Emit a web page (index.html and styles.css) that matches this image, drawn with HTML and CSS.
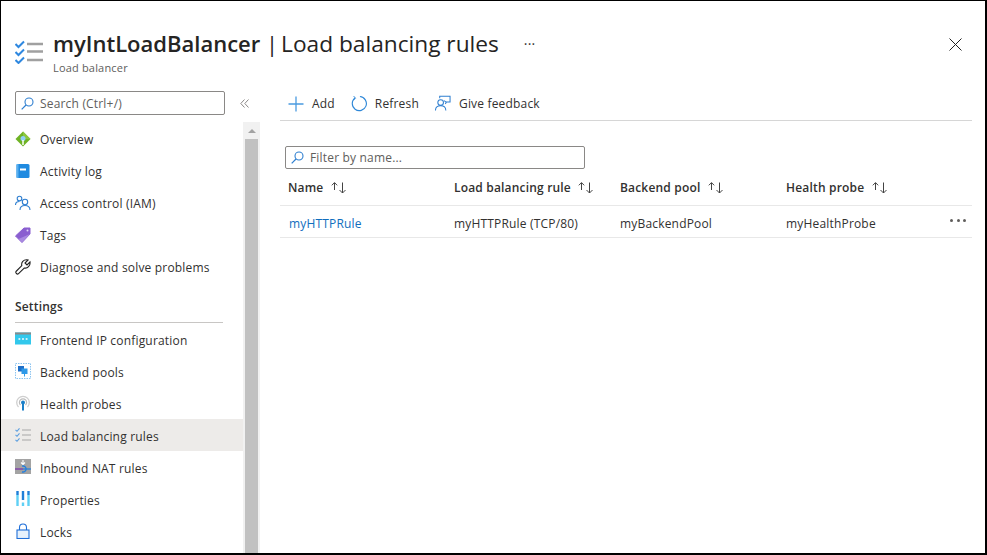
FILE: index.html
```html
<!DOCTYPE html>
<html lang="en">
<head>
  <meta charset="UTF-8">
  <title>myIntLoadBalancer | Load balancing rules</title>
  <link rel="stylesheet" href="styles.css">
</head>
<body>
  <div class="blade">
    <header class="blade-header">
      <svg class="header-icon" width="28" height="24" viewBox="0 0 28 24">
        <path d="M.5 4l3 3 5.500-5.500M.5 12l3 3 5.500-5.500M.5 20l3 3 5.500-5.500" fill="none" stroke="#2f88e0" stroke-width="2"/>
        <path d="M12 4h16M12 11.500h16M12 20h16" fill="none" stroke="#a0a0a0" stroke-width="2.400"/>
      </svg>
      <div class="title-block">
        <h1><b>myIntLoadBalancer</b> |<span>Load balancing rules</span></h1>
        <p>Load balancer</p>
      </div>
      <span class="title-more">···</span>
      <svg class="close-icon" width="13" height="13" viewBox="0 0 13 13">
        <path d="M.5.5l12 12M12.500.5l-12 12" stroke="#222" stroke-width="1" fill="none"/>
      </svg>
    </header>

    <div class="blade-body">
      <nav class="sidebar">
        <div class="sidebar-top">
          <div class="search-box">
            <svg width="13" height="13" viewBox="0 0 13 13"><circle cx="8" cy="5" r="4" fill="none" stroke="#2f7fd0" stroke-width="1.100"/><path d="M5 8l-4.300 4.300" stroke="#2f7fd0" stroke-width="1.200"/></svg>
            <span>Search (Ctrl+/)</span>
          </div>
          <svg class="collapse" width="9" height="9" viewBox="0 0 9 9"><path d="M4.500.5L.8 4.500l3.700 4M8.500.5L4.800 4.500l3.700 4" fill="none" stroke="#8a8886" stroke-width="1"/></svg>
        </div>
        <div class="sidebar-main">
          <ul class="menu">
            <li class="menu-item">
              <svg width="16" height="16" viewBox="0 0 16 16"><path d="M8 .5L15.500 8 8 15.500.5 8z" fill="#6fb325"/><path d="M8 .5L15.500 8 8 8z" fill="#8cc63f"/><circle cx="8" cy="7.500" r="2.500" fill="#8fd0f5"/><path d="M8 9v5" stroke="#fff" stroke-width="1.500"/></svg>
              <span>Overview</span>
            </li>
            <li class="menu-item">
              <svg width="16" height="16" viewBox="0 0 16 16"><rect x="1.500" y="1" width="13" height="14" rx="1.500" fill="#1f8ae0"/><rect x="1.500" y="1" width="2" height="14" fill="#5ab0f0"/><rect x="5" y="5.500" width="6" height="2" fill="#fff"/></svg>
              <span>Activity log</span>
            </li>
            <li class="menu-item">
              <svg width="16" height="16" viewBox="0 0 16 16" fill="none" stroke="#2f7fd0" stroke-width="1.100"><circle cx="4.500" cy="3.500" r="2.300"/><path d="M.5 10c0-2.500 1.500-3.500 4-3.500"/><circle cx="10" cy="7" r="2.700"/><path d="M5 15c0-3 2-4.500 5-4.500s5 1.500 5 4.500"/></svg>
              <span>Access control (IAM)</span>
            </li>
            <li class="menu-item">
              <svg width="16" height="16" viewBox="0 0 16 16"><path d="M9 1h6v6l-8 8.500L.5 9z" fill="#8a5fd0" stroke="#8a5fd0" stroke-linejoin="round"/><path d="M15 7l-8 8.500L3.500 12z" fill="#a98ae0"/><circle cx="12.500" cy="3.500" r="1" fill="#e0d4f5"/></svg>
              <span>Tags</span>
            </li>
            <li class="menu-item">
              <svg width="16" height="16" viewBox="0 0 16 16"><path d="M1 12.500L6.800 6.700C6 3.500 8.500.5 12 .8l1 .2-3 3 2 2 3-3c.6 3.800-2.500 6.800-5.800 6l-5.900 5.800c-1.100 1-3.100-1-2.300-2.300z" fill="none" stroke="#222" stroke-width="1.100"/></svg>
              <span>Diagnose and solve problems</span>
            </li>
          </ul>
          <div class="menu-section">Settings</div>
          <ul class="menu menu-settings">
            <li class="menu-item">
              <svg width="16" height="16" viewBox="0 0 16 16"><rect y="1.500" width="16" height="12" fill="#32c8ec"/><rect y="1.500" width="16" height="2" fill="#8a8a8a"/><path d="M3.500 8h1.800M7.100 8h1.800M10.700 8h1.800" stroke="#fff" stroke-width="1.500"/></svg>
              <span>Frontend IP configuration</span>
            </li>
            <li class="menu-item">
              <svg width="16" height="16" viewBox="0 0 16 16"><rect x=".5" y=".5" width="15" height="15" fill="none" stroke="#8cc4f0" stroke-dasharray="1.500 1"/><rect x="3" y="3" width="6" height="5.500" fill="#1f6fc8"/><rect x="6.500" y="5.500" width="6" height="5.500" fill="#2f9ae8"/><path d="M9.500 11v2.500" stroke="#2f9ae8"/></svg>
              <span>Backend pools</span>
            </li>
            <li class="menu-item">
              <svg width="16" height="16" viewBox="0 0 16 16"><path d="M3.500 12a6.300 6.300 0 1 1 9 0" fill="none" stroke="#cfcfcf" stroke-width="1.300"/><path d="M5.500 10a3.600 3.600 0 1 1 5 0" fill="none" stroke="#bdbdbd" stroke-width="1.200"/><circle cx="8" cy="7.500" r="2" fill="#1a7fc8"/><path d="M8 8v7.500" stroke="#1a7fc8" stroke-width="2"/></svg>
              <span>Health probes</span>
            </li>
            <li class="menu-item active">
              <svg width="16" height="16" viewBox="0 0 16 16"><path d="M.5 2.800l1.500 1.500 2.500-3M.5 7.800l1.500 1.500 2.500-3M.5 12.800l1.500 1.500 2.500-3" fill="none" stroke="#5a9ee0" stroke-width="1.100"/><path d="M7 3h9M7 8h9M7 13h9" stroke="#a8a8a8" stroke-width="1.200"/></svg>
              <span>Load balancing rules</span>
            </li>
            <li class="menu-item">
              <svg width="16" height="16" viewBox="0 0 16 16"><rect width="16" height="15" fill="#a3a3a3"/><path d="M8 1v4M6 3.500L8 5.500l2-2" fill="none" stroke="#fff" stroke-width="1.100"/><path d="M0 10h8" stroke="#7a2fa8" stroke-width="1.200"/><path d="M8 10h8" stroke="#1f7fe0" stroke-width="1.200"/><path d="M7 7.200a3 3 0 1 1 0 5.600" fill="none" stroke="#1f7fe0" stroke-width="1.300"/></svg>
              <span>Inbound NAT rules</span>
            </li>
            <li class="menu-item">
              <svg width="16" height="16" viewBox="0 0 16 16"><path d="M2.500 0v4M8 0v9M13.500 0v4" stroke="#1f7fd8" stroke-width="2.400"/><path d="M2.500 4v11M13.500 4v11M8 11.500V15" stroke="#5fd0f5" stroke-width="2.400"/></svg>
              <span>Properties</span>
            </li>
            <li class="menu-item">
              <svg width="16" height="16" viewBox="0 0 16 16"><rect x="2" y="7" width="12" height="8.500" fill="#e6f1fc" stroke="#1f6fd8" stroke-width="1.100"/><path d="M4.500 7V4.500a3.500 3.500 0 0 1 7 0V7" fill="none" stroke="#1f6fd8" stroke-width="1.100"/></svg>
              <span>Locks</span>
            </li>
          </ul>
        </div>
      </nav>

      <div class="scrollbar"><div class="scroll-up"></div><div class="scroll-thumb"></div></div>

      <main class="content">
        <div class="toolbar">
          <button class="tool">
            <svg width="16" height="16" viewBox="0 0 16 16"><path d="M8 .5v15M.5 8h15" stroke="#4a9be0" stroke-width="1.300"/></svg>
            Add
          </button>
          <button class="tool">
            <svg width="16" height="17" viewBox="0 0 17 17"><path d="M9.500 1.100a7.500 7.500 0 1 1-5.200 1.500" fill="none" stroke="#2f88d8" stroke-width="1.200"/><path d="M2.800 .6l2 2.300-2.400 1.700" fill="none" stroke="#2f88d8" stroke-width="1"/></svg>
            Refresh
          </button>
          <button class="tool">
            <svg width="16" height="17" viewBox="0 0 17 17" fill="none" stroke="#2f7fd0" stroke-width="1.100"><path d="M5 3V.8h11V7h-4"/><path d="M9.500 5.500l2.500 1.500-1 2"/><circle cx="6" cy="7.500" r="3"/><path d="M.5 16c0-3.500 2-5 5.500-5s5.500 1.500 5.500 5"/></svg>
            Give feedback
          </button>
        </div>

        <div class="filter-box">
          <svg width="13" height="13" viewBox="0 0 13 13"><circle cx="8" cy="5" r="4" fill="none" stroke="#2f7fd0" stroke-width="1.100"/><path d="M5 8l-4.300 4.300" stroke="#2f7fd0" stroke-width="1.200"/></svg>
          <span>Filter by name...</span>
        </div>

        <div class="table">
          <div class="row head">
            <div class="cell">Name <svg class="sort" width="16" height="12" viewBox="0 0 16 12"><path d="M3.500 8V.8M.8 3.300L3.500.6l2.700 2.700M11.500 .5v10.500M8.500 8l3 3 3-3" fill="none" stroke="#444" stroke-width="1"/></svg></div>
            <div class="cell">Load balancing rule <svg class="sort" width="16" height="12" viewBox="0 0 16 12"><path d="M3.500 8V.8M.8 3.300L3.500.6l2.700 2.700M11.500 .5v10.500M8.500 8l3 3 3-3" fill="none" stroke="#444" stroke-width="1"/></svg></div>
            <div class="cell">Backend pool <svg class="sort" width="16" height="12" viewBox="0 0 16 12"><path d="M3.500 8V.8M.8 3.300L3.500.6l2.700 2.700M11.500 .5v10.500M8.500 8l3 3 3-3" fill="none" stroke="#444" stroke-width="1"/></svg></div>
            <div class="cell">Health probe <svg class="sort" width="16" height="12" viewBox="0 0 16 12"><path d="M3.500 8V.8M.8 3.300L3.500.6l2.700 2.700M11.500 .5v10.500M8.500 8l3 3 3-3" fill="none" stroke="#444" stroke-width="1"/></svg></div>
            <div class="cell"></div>
          </div>
          <div class="row body">
            <div class="cell link">myHTTPRule</div>
            <div class="cell">myHTTPRule (TCP/80)</div>
            <div class="cell">myBackendPool</div>
            <div class="cell">myHealthProbe</div>
            <div class="cell more"><i></i><i></i><i></i></div>
          </div>
        </div>
      </main>
    </div>
  </div>
</body>
</html>
```

FILE: styles.css
```css
* {
  box-sizing: border-box;
}
html, body {
  margin: 0;
  height: 100%;
  overflow: hidden;
}
body {
  font-family: 'Open Sans', 'Noto Sans', sans-serif;
  font-size: 12px;
  letter-spacing: .18px;
  color: #323130;
  background: #fff;
}
ul {
  list-style: none;
  margin: 0;
  padding: 0;
}
svg {
  flex: none;
  display: block;
}
.blade {
  height: 555px;
  border: 1px solid #000;
  border-width: 1px 2px 2px 1px;
  display: flex;
  flex-direction: column;
}
.blade-header {
  height: 86px;
  display: flex;
  align-items: flex-start;
  padding: 28px 23px 0 14px;
}
.header-icon {
  margin: 11px 10px 0 0;
}
.title-block h1 {
  margin: 0;
  font-size: 22px;
  line-height: 28px;
  font-weight: 400;
  letter-spacing: 0;
  color: #252423;
}
.title-block h1 b {
  font-weight: 600;
}
.title-block h1 span {
  margin-left: 3px;
  font-size: 22.7px;
}
.title-block p {
  margin: 3px 0 0;
  font-size: 11px;
  line-height: 14px;
  color: #605e5c;
}
.title-more {
  margin: 3px 0 0 25px;
  font-size: 14px;
  line-height: 24px;
}
.close-icon {
  margin: 9px 0 0 auto;
}
.blade-body {
  flex: 1;
  min-height: 0;
  display: flex;
}
.sidebar {
  width: 242px;
  display: flex;
  flex-direction: column;
}
.sidebar-top {
  display: flex;
  align-items: center;
  padding: 4px 0 0 14px;
}
.search-box {
  flex: none;
  width: 210px;
  height: 24px;
  border: 1px solid #8a8886;
  border-radius: 2px;
  display: flex;
  align-items: center;
  gap: 6px;
  padding: 0 5px;
  color: #605e5c;
}
.collapse {
  margin-left: 15px;
}
.sidebar-main {
  margin-top: 8px;
}
.menu-item {
  height: 32px;
  display: flex;
  align-items: center;
  gap: 9px;
  padding-left: 14px;
}
.menu-settings .menu-item span {
  padding-top: 2px;
}
.menu-item.active {
  background: #edebe9;
}
.menu-section {
  height: 40px;
  margin-right: 20px;
  margin-left: 14px;
  padding-top: 15px;
  line-height: 17px;
  font-weight: 600;
  border-bottom: 1px solid #c8c6c4;
}
.scrollbar {
  width: 17px;
  margin-top: 35px;
  background: #f1f1f1;
  display: flex;
  flex-direction: column;
  align-items: center;
}
.scroll-up {
  margin: 7px 0 6px;
  width: 0;
  height: 0;
  border: 4px solid transparent;
  border-top: 0;
  border-bottom: 4px solid #a3a3a3;
}
.scroll-thumb {
  flex: 1;
  width: 13px;
  background: #c1c1c1;
}
.content {
  flex: 1;
  min-width: 0;
  padding: 0 13px 0 20px;
}
.toolbar {
  height: 34px;
  display: flex;
  align-items: center;
  gap: 16px;
  padding-left: 8px;
  border-bottom: 1px solid #d6d6d6;
}
.tool {
  display: flex;
  align-items: center;
  gap: 8px;
  border: 0;
  padding: 0;
  background: none;
  font: inherit;
  letter-spacing: inherit;
  color: #323130;
}
.filter-box {
  width: 300px;
  height: 23px;
  margin: 25px 0 0 5px;
  border: 1px solid #8a8886;
  border-radius: 2px;
  display: flex;
  align-items: center;
  gap: 6px;
  padding: 0 5px;
  color: #605e5c;
}
.row {
  display: grid;
  grid-template-columns: 166px 166px 166px 150px 1fr;
  height: 32px;
  align-items: center;
  border-bottom: 1px solid #e8e8e8;
  padding-left: 8px;
}
.row.head {
  height: 37px;
  font-weight: 600;
}
.row.head .cell {
  display: flex;
  align-items: center;
  gap: 7.5px;
}
.row.body .cell {
  padding-top: 3px;
}
.sort {
  margin-top: 1px;
}
.link {
  color: #106ebe;
  padding-left: 1px;
}
.row.body .more {
  display: flex;
  justify-content: flex-end;
  gap: 3.5px;
  padding: 0 6px 2px 0;
}
.more i {
  width: 3px;
  height: 3px;
  border-radius: 50%;
  background: #605e5c;
}
```
